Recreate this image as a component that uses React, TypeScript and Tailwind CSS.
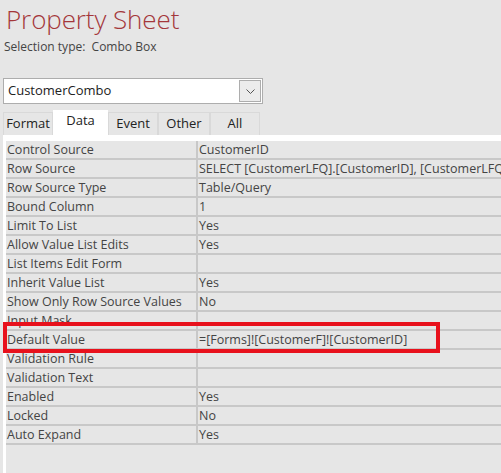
import React from 'react';

const rows: [string, string][] = [
  ['Control Source', 'CustomerID'],
  ['Row Source', 'SELECT [CustomerLFQ].[CustomerID], [CustomerLFQ].[CustomerName] FROM [CustomerLFQ];'],
  ['Row Source Type', 'Table/Query'],
  ['Bound Column', '1'],
  ['Limit To List', 'Yes'],
  ['Allow Value List Edits', 'Yes'],
  ['List Items Edit Form', ''],
  ['Inherit Value List', 'Yes'],
  ['Show Only Row Source Values', 'No'],
  ['Input Mask', ''],
  ['Default Value', '=[Forms]![CustomerF]![CustomerID]'],
  ['Validation Rule', ''],
  ['Validation Text', ''],
  ['Enabled', 'Yes'],
  ['Locked', 'No'],
  ['Auto Expand', 'Yes'],
];

const tabs = ['Format', 'Data', 'Event', 'Other', 'All'];
const tabWidths = ['w-[50px]', 'w-[55px]', 'w-[50px]', 'w-[52px]', 'w-[50px]'];

export default function App() {
  return (
    <div className="w-[501px] h-[473px] overflow-hidden bg-[#e6e6e6] font-['Open_Sans',sans-serif] text-[#444] relative">
      {/* Header */}
      <div className="pl-[6px] pt-[1px]">
        <h1 className="text-[26px] leading-[36px] font-light text-[#a4373a] tracking-[-0.1px]">
          Property Sheet
        </h1>
        <p className="text-[12px] leading-[16px] mt-[2px] -ml-[2px]">
          Selection type:&nbsp; Combo Box
        </p>
      </div>

      {/* Object picker */}
      <div className="ml-[3px] mt-[23px] w-[260px] h-[26px] bg-white border border-[#adadad] flex items-center">
        <span className="pl-[4px] flex-1 text-[13px] text-[#222]">CustomerCombo</span>
        <div className="w-[22px] h-[22px] mr-[1px] border border-[#adadad] bg-[#ececec] flex items-center justify-center">
          <svg width="9" height="5" viewBox="0 0 9 5" fill="none">
            <path d="M0.5 0.5 L4.5 4.5 L8.5 0.5" stroke="#555" strokeWidth="1" />
          </svg>
        </div>
      </div>

      {/* Tabs */}
      <div className="flex ml-[3px] mt-[6px] h-[25px] items-end">
        {tabs.map((t, i) =>
          t === 'Data' ? (
            <div
              key={t}
              className={`${tabWidths[i]} h-[25px] bg-white text-[13px] text-[#222] flex justify-center pt-[1px]`}
            >
              {t}
            </div>
          ) : (
            <div
              key={t}
              className={`${tabWidths[i]} h-[23px] border border-b-0 border-[#d9d9d9] text-[13px] text-[#222] flex items-center justify-center`}
            >
              {t}
            </div>
          )
        )}
      </div>

      {/* Property grid */}
      <div className="ml-[3px] border-t-[6px] border-l-[3px] border-white h-[400px]">
        {rows.map(([label, value]) => (
          <div key={label} className="flex h-[19px] border-b-2 border-[#c8c8c8] text-[12.5px] leading-[17px]">
            <div className="w-[190px] shrink-0 pl-[1px] whitespace-nowrap overflow-hidden">{label}</div>
            <div className="w-[2px] shrink-0 bg-[#c8c8c8]" />
            <div className="flex-1 pl-[1px] whitespace-nowrap overflow-hidden">{value}</div>
          </div>
        ))}
      </div>

      {/* Highlight box */}
      <div className="absolute left-[3px] top-[322px] w-[437px] h-[31px] border-4 border-[#e8111c]" />
    </div>
  );
}
